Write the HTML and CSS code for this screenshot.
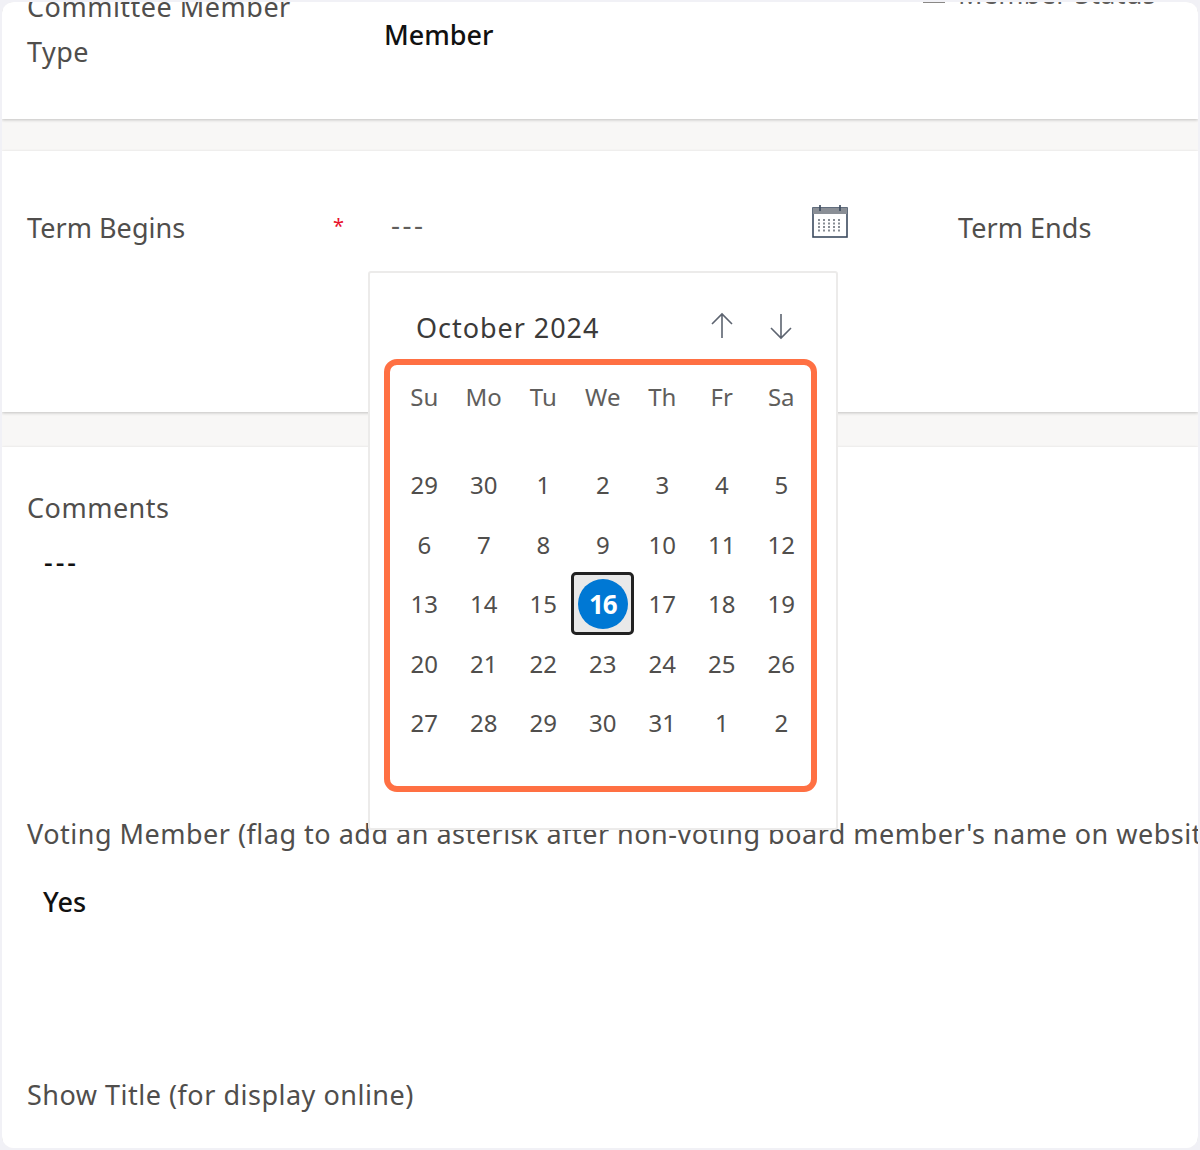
FILE: index.html
```html
<!DOCTYPE html>
<html lang="en">

<head>
    <meta charset="UTF-8" />
    <meta name="viewport" content="width=device-width, initial-scale=1.0" />
    <title>Committee Member</title>
    <link rel="stylesheet" href="styles.css">
</head>

<body>
    <div class="card">
        <section class="section section-type">
            <div class="label label-type">Committee Member<br>Type</div>
            <div class="value value-member">Member</div>
            <div class="status">
                <span class="status-box"></span>
                <span class="status-text">Member Status</span>
            </div>
        </section>

        <section class="section section-term">
            <div class="label label-term label-begins">Term Begins</div>
            <div class="required">*</div>
            <div class="empty-date">---</div>
            <svg class="calendar-icon" viewBox="0 0 36 34" width="36" height="34">
                <rect x="1" y="4" width="34" height="29" fill="none" stroke="#3b4a5e" stroke-width="1.6" />
                <rect x="1" y="4" width="34" height="6" fill="#8a8f96" />
                <path d="M8 1v6M28 1v6" stroke="#3b4a5e" stroke-width="1.6" />
                <path d="M7 15v14M12 15v14M17 15v14M22 15v14M27 15v14" stroke="#7a8088" stroke-width="1.8" stroke-dasharray="2 1.5" fill="none" />
            </svg>
            <div class="label label-term">Term Ends</div>
        </section>

        <section class="section section-rest">
            <div class="label">Comments</div>
            <div class="value value-comments">---</div>
            <div class="label label-voting">Voting Member (flag to add an asterisk after non-voting board member's name on website)</div>
            <div class="value value-yes">Yes</div>
            <div class="label label-show">Show Title (for display online)</div>
        </section>

        <div class="picker">
            <div class="picker-head">
                <span class="picker-month">October 2024</span>
                <svg class="arrow arrow-up" viewBox="0 0 24 28" width="24" height="28">
                    <path d="M12 26V2M2 12L12 2l10 10" fill="none" stroke="#5d6470" stroke-width="1.6" />
                </svg>
                <svg class="arrow arrow-down" viewBox="0 0 24 28" width="24" height="28">
                    <path d="M12 2v24M2 16l10 10 10-10" fill="none" stroke="#5d6470" stroke-width="1.6" />
                </svg>
            </div>
            <div class="days">
                <div class="day-name">Su</div>
                <div class="day-name">Mo</div>
                <div class="day-name">Tu</div>
                <div class="day-name">We</div>
                <div class="day-name">Th</div>
                <div class="day-name">Fr</div>
                <div class="day-name">Sa</div>

                <div class="day">29</div>
                <div class="day">30</div>
                <div class="day">1</div>
                <div class="day">2</div>
                <div class="day">3</div>
                <div class="day">4</div>
                <div class="day">5</div>

                <div class="day">6</div>
                <div class="day">7</div>
                <div class="day">8</div>
                <div class="day">9</div>
                <div class="day">10</div>
                <div class="day">11</div>
                <div class="day">12</div>

                <div class="day">13</div>
                <div class="day">14</div>
                <div class="day">15</div>
                <div class="day"><span class="today"><span class="today-circle">16</span></span></div>
                <div class="day">17</div>
                <div class="day">18</div>
                <div class="day">19</div>

                <div class="day">20</div>
                <div class="day">21</div>
                <div class="day">22</div>
                <div class="day">23</div>
                <div class="day">24</div>
                <div class="day">25</div>
                <div class="day">26</div>

                <div class="day">27</div>
                <div class="day">28</div>
                <div class="day">29</div>
                <div class="day">30</div>
                <div class="day">31</div>
                <div class="day">1</div>
                <div class="day">2</div>
            </div>
            <div class="highlight"></div>
        </div>
    </div>
</body>

</html>
```

FILE: styles.css
```css
* {
    margin: 0;
    padding: 0;
    box-sizing: border-box;
}

html,
body {
    height: 100%;
}

body {
    background-color: #f1f1f6;
    padding: 2px;
    font-family: "Noto Sans", sans-serif;
    color: #484644;
    overflow: hidden;
}

.card {
    position: relative;
    height: 1146px;
    background-color: #f8f7f6;
    border-radius: 12px;
    overflow: hidden;
}

.section {
    background-color: #fff;
    box-shadow: 0 1px 3px rgba(0, 0, 0, 0.22);
}

.label {
    font-size: 27px;
    line-height: 40px;
    font-weight: 400;
    color: #504e4c;
    letter-spacing: 0.5px;
}

.value {
    font-size: 27px;
    line-height: 40px;
    font-weight: 500;
    color: #111;
    letter-spacing: 0;
}

.section-type {
    height: 117px;
    display: flex;
    padding-left: 25px;
}

.label-type {
    width: 357px;
    margin-top: -18px;
    line-height: 45px;
    white-space: nowrap;
}

.value-member {
    width: 539px;
    margin-top: 13px;
}

.status {
    display: flex;
    align-items: center;
    gap: 13px;
    margin-top: -21px;
    height: 24px;
    font-size: 27px;
    letter-spacing: 0.3px;
    color: #605e5c;
    white-space: nowrap;
}

.status-box {
    width: 22px;
    height: 20px;
    border: 2px solid #8a8886;
}

.section-term {
    height: 261px;
    margin-top: 32px;
    display: flex;
    align-items: flex-start;
    padding: 57px 0 0 25px;
}

.label-term {
    letter-spacing: 0.05px;
}

.label-begins {
    width: 306px;
}

.required {
    width: 58px;
    color: #e8112d;
    font-size: 20px;
    line-height: 36px;
}

.empty-date {
    width: 421px;
    font-size: 28px;
    line-height: 32px;
    color: #605e5c;
    letter-spacing: 2.5px;
}

.calendar-icon {
    margin-top: -4px;
    margin-right: 110px;
}

.section-rest {
    height: 702px;
    margin-top: 35px;
    padding: 41px 0 0 25px;
    white-space: nowrap;
    overflow: hidden;
}

.value-comments {
    margin: 14px 0 0 17px;
    letter-spacing: 3px;
}

.label-voting {
    margin-top: 232px;
}

.value-yes {
    margin: 28px 0 0 16px;
}

.label-show {
    margin-top: 153px;
}

/* date picker over the form */
.picker {
    position: absolute;
    left: 366px;
    top: 269px;
    width: 470px;
    height: 559px;
    background-color: #fff;
    border: 2px solid #ecebea;
    border-radius: 3px;
    padding: 0 0 0 24px;
}

.picker-head {
    height: 85px;
    display: flex;
    align-items: center;
    padding-top: 23px;
}

.picker-month {
    width: 316px;
    padding-left: 22px;
    font-size: 27px;
    color: #3b3a39;
    letter-spacing: 0.95px;
}

.arrow-up {
    margin-right: 35px;
    margin-top: -2px;
}

.arrow-down {
    margin-top: -2px;
}

.days {
    width: 417px;
    margin-left: 0.5px;
    display: grid;
    grid-template-columns: repeat(7, 59.5px);
    grid-auto-rows: 59.5px;
    margin-top: 9px;
}

.day-name,
.day {
    display: flex;
    align-items: center;
    justify-content: center;
    font-size: 24px;
    color: #504e4c;
}

.day-name {
    color: #605e5c;
}

.day {
    position: relative;
    top: 28.5px;
}

.today {
    display: flex;
    align-items: center;
    justify-content: center;
    width: 63px;
    height: 63px;
    flex-shrink: 0;
    background-color: #e9e9e9;
    border: 3px solid #222;
    border-radius: 5px;
}

.today-circle {
    display: flex;
    align-items: center;
    justify-content: center;
    width: 50px;
    height: 50px;
    border-radius: 50%;
    background-color: #0078d4;
    color: #fff;
    font-weight: 700;
    font-size: 26px;
    letter-spacing: -1px;
}

/* annotation box */
.highlight {
    position: absolute;
    left: 14px;
    top: 86px;
    width: 433px;
    height: 433px;
    border: 6px solid #ff7043;
    border-radius: 13px;
    pointer-events: none;
}
```
